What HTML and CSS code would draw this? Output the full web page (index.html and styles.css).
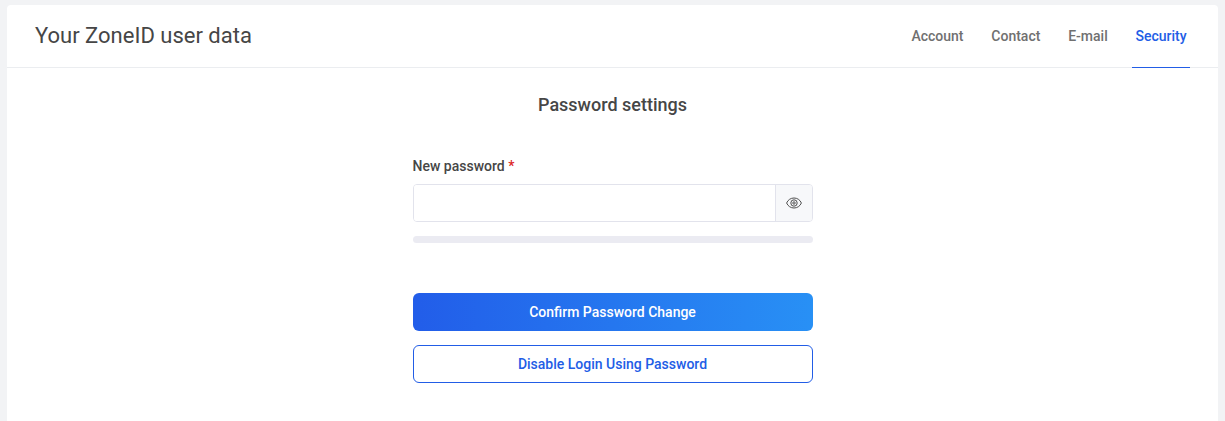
FILE: index.html
```html
<!DOCTYPE html>
<html lang="en">
<head>
  <meta charset="UTF-8">
  <title>Your ZoneID user data</title>
  <link rel="stylesheet" href="styles.css">
</head>
<body>

  <div class="card">
    <!-- Title and tabs -->
    <header class="card-header">
      <h1>Your ZoneID user data</h1>
      <nav class="tabs">
        <a href="#">Account</a>
        <a href="#">Contact</a>
        <a href="#">E-mail</a>
        <a href="#" class="active">Security</a>
      </nav>
    </header>

    <!-- Password form -->
    <form class="password-form">
      <h2>Password settings</h2>
      <label for="password">New password <span class="required">*</span></label>
      <div class="input-group">
        <input type="password" id="password">
        <button type="button" class="toggle" aria-label="Show password">
          <svg width="16" height="12" viewBox="0 0 16 12" fill="none" stroke="#505050">
            <path d="M.6 6C2 2.800 4.700 1 8 1s6 1.800 7.400 5c-1.400 3.200-4.100 5-7.400 5S2 9.200.6 6z"/>
            <circle cx="8" cy="6" r="3.200"/>
            <circle cx="8" cy="6" r="1.200"/>
          </svg>
        </button>
      </div>
      <div class="strength"></div>
      <button type="button" class="btn btn-primary">Confirm Password Change</button>
      <button type="button" class="btn btn-outline">Disable Login Using Password</button>
    </form>
  </div>

</body>
</html>
```
FILE: styles.css
```css
* {
  box-sizing: border-box;
}

body {
  margin: 0;
  padding: 5px 7px 0;
  background: #f2f3f5;
  color: #464646;
  font-family: Roboto, sans-serif;
  font-size: 14px;
}

.card {
  height: calc(100vh - 5px);
  background: #fff;
  border-radius: 4px 4px 0 0;
}

.card-header {
  display: flex;
  justify-content: space-between;
  height: 63px;
  padding: 0 28px;
  border-bottom: 1px solid #ebedf0;
}

h1 {
  margin: 0;
  font-size: 22px;
  font-weight: 400;
  line-height: 61px;
}

/* Tabs */
.tabs {
  display: flex;
  gap: 21px;
}

.tabs a {
  height: 63px;
  padding: 0 3.400px;
  color: #707070;
  font-weight: 500;
  line-height: 63px;
  text-decoration: none;
}

.tabs .active {
  color: #225de6;
  border-bottom: 1px solid #225de6;
}

/* Form */
.password-form {
  display: flex;
  flex-direction: column;
  width: 400px;
  margin: 0 auto;
  padding-top: 25px;
}

h2 {
  margin: 0 0 40px;
  font-size: 18px;
  font-weight: 500;
  line-height: 24px;
  text-align: center;
}

label {
  margin-bottom: 9px;
  font-weight: 500;
  line-height: 18px;
}

.required {
  color: #dc2626;
}

.input-group {
  display: flex;
  height: 38px;
  border: 1px solid #e2e3ec;
  border-radius: 4px;
  overflow: hidden;
}

.input-group input {
  flex: 1;
  border: 0;
  outline: 0;
}

.toggle {
  display: flex;
  align-items: center;
  justify-content: center;
  width: 37px;
  padding: 0;
  background: #f7f8fa;
  border: 0;
  border-left: 1px solid #e2e3ec;
}

.strength {
  height: 7px;
  margin: 14px 0 50px;
  background: #ebebf2;
  border-radius: 4px;
}

.btn {
  height: 38px;
  margin-bottom: 14px;
  border-radius: 6px;
  font-family: inherit;
  font-size: 14px;
  font-weight: 500;
}

.btn-primary {
  border: 0;
  background: linear-gradient(90deg, #225de9, #2890f5);
  color: #fff;
}

.btn-outline {
  border: 1px solid #225de6;
  background: #fff;
  color: #225de6;
}
```
